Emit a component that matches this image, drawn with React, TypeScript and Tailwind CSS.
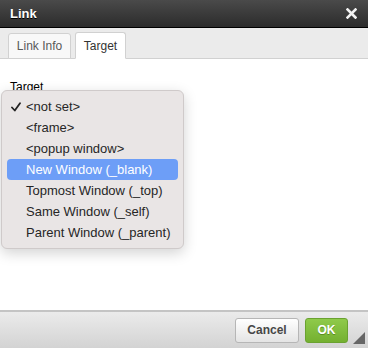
import { FunctionComponent } from 'react'

const options = [
  '<not set>',
  '<frame>',
  '<popup window>',
  'New Window (_blank)',
  'Topmost Window (_top)',
  'Same Window (_self)',
  'Parent Window (_parent)',
]

const App: FunctionComponent = () => {
  const selected = 0
  const hovered = 3

  return (
    <div className="flex h-[348px] w-[368px] flex-col overflow-hidden bg-white font-['Liberation_Sans',Arial,sans-serif] text-[12px] text-[#333]">
      {/* title bar */}
      <div className="flex h-[28px] shrink-0 items-center justify-between border-b border-black bg-gradient-to-b from-[#4a4a4a] to-[#2c2c2c] pl-[10px] pr-[10px]">
        <span className="text-[13px] font-bold text-white [text-shadow:0_1px_0_#000]">Link</span>
        <svg width="11" height="11" viewBox="0 0 11 11" className="mr-[1px]">
          <path d="M1.5 1.5 L9.5 9.5 M9.5 1.5 L1.5 9.5" stroke="#f2f2f2" strokeWidth="2.6" strokeLinecap="square" />
        </svg>
      </div>

      {/* tabs */}
      <div className="flex h-[31px] shrink-0 items-end gap-[4px] border-b border-[#d1d1d1] bg-[#ebebeb] pl-[8px]">
        <div className="-mb-px flex h-[26px] w-[63px] items-center justify-center rounded-t-[3px] border border-[#d1d1d1] bg-[#f8f8f8] text-[#595959]">
          Link Info
        </div>
        <div className="-mb-px flex h-[27px] w-[51px] items-center justify-center rounded-t-[3px] border border-b-white border-[#d1d1d1] bg-white text-[#333]">
          Target
        </div>
      </div>

      {/* body */}
      <div className="relative flex-1 px-[10px] pt-[21px]">
        <div className="leading-[14px] text-[#000]">Target</div>

        <div className="absolute left-[1px] top-[31px] w-[183px] rounded-[6px] border border-[#cfcaca] bg-[#e9e5e5] py-[5px] font-['Liberation_Sans',Arial,sans-serif] text-[13px] text-[#262626] shadow-[0_4px_14px_rgba(0,0,0,0.18)]">
          {options.map((o, i) => (
            <div
              key={o}
              className={
                i == hovered
                  ? 'relative mx-[5px] flex h-[21px] items-center whitespace-nowrap rounded-[4px] bg-[#6d9ef7] pl-[19px] text-white'
                  : 'relative mx-[5px] flex h-[21px] items-center whitespace-nowrap pl-[19px]'
              }
            >
              {i == selected && (
                <svg width="10" height="10" viewBox="0 0 10 10" className="absolute left-[4px] top-[6px]">
                  <path d="M1 5.5 L3.8 8.5 L9 1.2" stroke="#222" strokeWidth="1.8" fill="none" strokeLinecap="round" strokeLinejoin="round" />
                </svg>
              )}
              {o}
            </div>
          ))}
        </div>
      </div>

      {/* footer */}
      <div className="relative flex h-[38px] shrink-0 items-center justify-end gap-[6px] border-t-2 border-[#c4c4c4] bg-gradient-to-b from-[#ebebeb] to-[#d3d3d3] pr-[20px]">
        <button className="h-[25px] w-[64px] rounded-[3px] border border-[#b6b6b6] bg-gradient-to-b from-[#ffffff] to-[#e4e4e4] text-[12px] font-bold text-[#474747]">
          Cancel
        </button>
        <button className="h-[25px] w-[43px] rounded-[3px] border border-[#6aa230] bg-gradient-to-b from-[#8fca4a] to-[#74b030] text-[12px] font-bold text-white [text-shadow:0_1px_0_#5a8e22]">
          OK
        </button>
        <svg width="12" height="12" viewBox="0 0 12 12" className="absolute bottom-[4px] right-[3px]">
          <path d="M12 0 L12 12 L0 12 Z" fill="#666" />
        </svg>
      </div>
    </div>
  )
}

export default App
